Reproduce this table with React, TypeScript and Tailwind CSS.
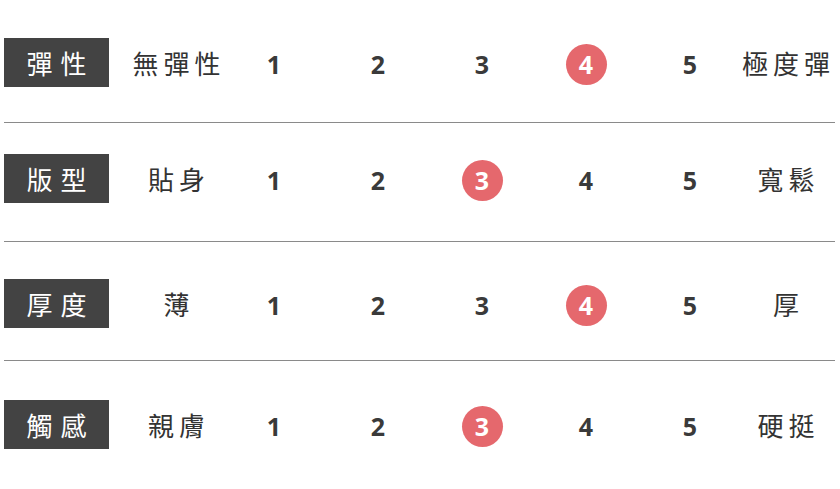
const rows = [
  { label: '彈性', low: '無彈性', high: '極度彈', value: 4, pad: 'pt-[38px] pb-[35px] border-b' },
  { label: '版型', low: '貼身', high: '寬鬆', value: 3, pad: 'pt-[31px] pb-[38px] border-b' },
  { label: '厚度', low: '薄', high: '厚', value: 4, pad: 'pt-[37px] pb-[32px] border-b' },
  { label: '觸感', low: '親膚', high: '硬挺', value: 3, pad: 'pt-[39px] pb-[40px]' },
];

const cjk = { fontFamily: '"Noto Sans CJK TC", "Noto Sans", sans-serif' };

function Scale({ value }: { value: number }) {
  return (
    <>
      {[1, 2, 3, 4, 5].map((n) => (
        <div key={n} className="w-[104px] shrink-0 flex justify-center items-center">
          {n === value ? (
            <span className="w-[41px] h-[41px] rounded-full bg-[#e5686d] text-white flex items-center justify-center text-[25px] font-bold leading-none mt-[3px]">
              {n}
            </span>
          ) : (
            <span className="text-[25px] font-bold text-[#3a3a3a] leading-none mt-[3px]">{n}</span>
          )}
        </div>
      ))}
    </>
  );
}

export default function App() {
  return (
    <div className="w-[840px] h-[489px] bg-white overflow-hidden" style={{ fontFamily: '"Open Sans", sans-serif' }}>
      <div className="ml-[4px] w-[831px]">
        {rows.map((row) => (
          <div key={row.label} className={`flex items-center border-[#8a8a8a] ${row.pad}`}>
            {/* label box */}
            <div
              className="w-[105px] h-[49px] shrink-0 bg-[#434343] text-white flex items-center justify-center text-[26px] tracking-[8px] pl-[8px] whitespace-nowrap"
              style={cjk}
            >
              {row.label}
            </div>

            <div
              className="ml-[22px] w-[91px] shrink-0 flex justify-center text-[26px] text-[#333] tracking-[5px] pl-[5px] whitespace-nowrap"
              style={cjk}
            >
              {row.low}
            </div>

            <Scale value={row.value} />

            <div
              className="w-[88px] shrink-0 flex justify-center text-[26px] text-[#333] tracking-[5px] pl-[5px] whitespace-nowrap"
              style={cjk}
            >
              {row.high}
            </div>
          </div>
        ))}
      </div>
    </div>
  );
}
